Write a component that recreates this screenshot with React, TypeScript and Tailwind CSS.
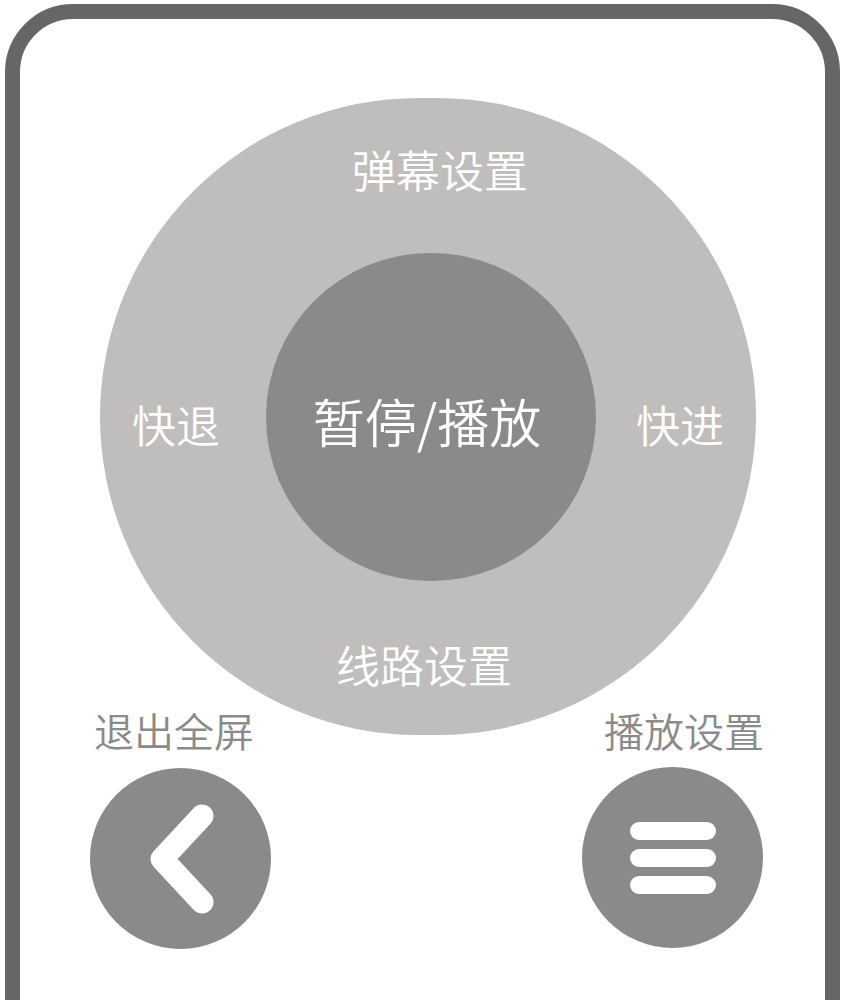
export default function App() {
  return (
    <div className="h-[1000px] w-[845px] overflow-hidden bg-white font-['Noto_Sans_CJK_SC','Noto_Sans',sans-serif] font-[350]">
      {/* Remote frame */}
      <div className="ml-[5px] mt-[4px] h-[1100px] w-[835px] rounded-[68px] border-[15px] border-[#666666]">
        {/* D-pad */}
        <div className="ml-[80px] mt-[79px] flex h-[637px] w-[656px] flex-col items-center rounded-full bg-[#bfbebc] pt-[49px]">
          <div className="ml-[24px] whitespace-nowrap text-[44px] leading-[44px] text-white">弹幕设置</div>
          <div className="mt-[62px] flex w-full items-center">
            <div className="ml-[32px] mt-[14px] whitespace-nowrap text-[44px] leading-[44px] text-white">快退</div>
            <div className="ml-[46px] flex h-[328px] w-[330px] items-center justify-center rounded-full bg-[#8a8a8a]">
              <span className="mt-[8px] ml-[-8px] whitespace-nowrap text-[52px] leading-[52px] text-white">暂停/播放</span>
            </div>
            <div className="ml-[40px] mt-[14px] whitespace-nowrap text-[44px] leading-[44px] text-white">快进</div>
          </div>
          <div className="mt-[61px] mr-[8px] whitespace-nowrap text-[44px] leading-[44px] text-white">线路设置</div>
        </div>

        {/* Bottom buttons */}
        <div className="-mt-[25px] flex">
          <div className="ml-[70px] flex w-[181px] flex-col">
            <div className="ml-[4px] whitespace-nowrap text-[40px] leading-[40px] text-[#8a8a8a]">退出全屏</div>
            <button className="mt-[18px] flex h-[181px] w-[181px] items-center justify-center rounded-full bg-[#8a8a8a]">
              <svg width="181" height="181" viewBox="0 0 181 181">
                <path
                  d="M112 48 L72 91 L112 134"
                  fill="none"
                  stroke="white"
                  strokeWidth="23"
                  strokeLinecap="round"
                  strokeLinejoin="round"
                />
              </svg>
            </button>
          </div>
          <div className="ml-[311px] flex w-[181px] flex-col">
            <div className="ml-[22px] whitespace-nowrap text-[40px] leading-[40px] text-[#8a8a8a]">播放设置</div>
            <button className="mt-[17px] flex h-[181px] w-[181px] flex-col items-center justify-center gap-[9px] rounded-full bg-[#8a8a8a]">
              <span className="h-[18px] w-[86px] rounded-full bg-white" />
              <span className="h-[18px] w-[86px] rounded-full bg-white" />
              <span className="h-[18px] w-[86px] rounded-full bg-white" />
            </button>
          </div>
        </div>
      </div>
    </div>
  )
}
